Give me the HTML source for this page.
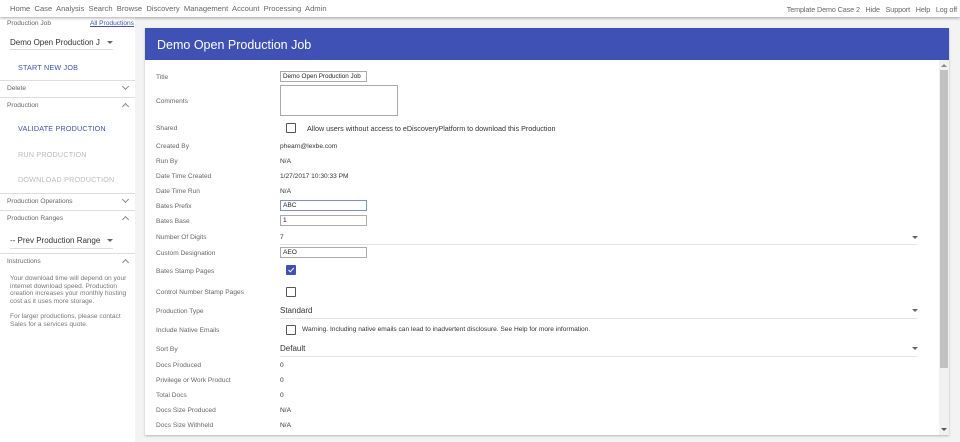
<!DOCTYPE html>
<html><head><meta charset="utf-8"><style>
*{margin:0;padding:0;box-sizing:border-box}
body{width:960px;height:442px;overflow:hidden;background:#f3f3f3;font-family:"Liberation Sans",sans-serif;position:relative;color:#333}
.a{position:absolute;white-space:nowrap}
#nav{position:absolute;left:0;top:0;width:960px;height:17px;background:#fff;box-shadow:0 1px 3px rgba(0,0,0,.35);z-index:2}
#nav .a{font-size:7.6px;color:#666;top:4px}
#side{position:absolute;left:0;top:17px;width:135px;height:425px;background:#fff}
.sl{font-size:6.6px;color:#666}
.hr{position:absolute;left:0;width:135px;height:1px;background:#ddd}
.chev{position:absolute;left:123px;width:5px;height:5px;border-right:1px solid #888;border-bottom:1px solid #888}
.dn{transform:rotate(45deg)}.up{transform:rotate(-135deg)}
.btn{font-size:7.2px;letter-spacing:.2px}
#card{position:absolute;left:145px;top:28px;width:804px;height:407px;background:#fff;box-shadow:0 1px 2px rgba(0,0,0,.25)}
#hd{position:absolute;left:0;top:0;width:804px;height:32px;background:#3f51b5;color:#fff;font-size:12.5px;padding:10px 0 0 12px}
.l{font-size:6.6px;color:#666;left:11px}
.v{font-size:6.6px;color:#333;left:135px}
.in{position:absolute;left:135px;width:87px;height:11px;border:1px solid #aaa;font-size:6.6px;line-height:9px;padding:0 2px;color:#222;white-space:nowrap;overflow:hidden}
.cb{position:absolute;left:141px;width:10px;height:10px;border:1.3px solid #555;border-radius:1px}
.ul{position:absolute;left:135px;width:637px;height:1px;background:#e2e2e2}
.tri{position:absolute;left:767px;width:0;height:0;border-left:3px solid transparent;border-right:3px solid transparent;border-top:3px solid #666}
</style></head><body>
<div id="nav">
<div class="a" style="left:10px">Home&nbsp; Case&nbsp; Analysis&nbsp; Search&nbsp; Browse&nbsp; Discovery&nbsp; Management&nbsp; Account&nbsp; Processing&nbsp; Admin</div>
<div class="a" style="right:3px;top:4.5px;font-size:7.2px;letter-spacing:-0.1px">Template Demo Case 2&nbsp;&nbsp; Hide&nbsp;&nbsp; Support&nbsp;&nbsp; Help&nbsp;&nbsp; Log off</div>
</div>
<div id="side">
<div class="a sl" style="left:7px;top:3px">Production Job</div>
<div class="a sl" style="left:90px;top:3px;color:#3f51b5;text-decoration:underline">All Productions</div>
<div class="a" style="left:10px;top:21px;font-size:8px;color:#333">Demo Open Production J</div>
<div class="tri" style="left:107px;top:24px"></div>
<div style="position:absolute;left:10px;top:32px;width:103px;height:1px;background:#ddd"></div>
<div class="a btn" style="left:18px;top:46px;color:#3f51b5">START NEW JOB</div>
<div class="hr" style="top:63px"></div>
<div class="a sl" style="left:7px;top:68px">Delete</div><div class="chev dn" style="top:67px"></div>
<div class="hr" style="top:80px"></div>
<div class="a sl" style="left:7px;top:85px">Production</div><div class="chev up" style="top:87px"></div>
<div class="a btn" style="left:18px;top:107px;color:#3f51b5">VALIDATE PRODUCTION</div>
<div class="a btn" style="left:18px;top:133px;color:#bbb">RUN PRODUCTION</div>
<div class="a btn" style="left:18px;top:158px;color:#bbb">DOWNLOAD PRODUCTION</div>
<div class="hr" style="top:176px"></div>
<div class="a sl" style="left:7px;top:181px">Production Operations</div><div class="chev dn" style="top:180px"></div>
<div class="hr" style="top:193px"></div>
<div class="a sl" style="left:7px;top:198px">Production Ranges</div><div class="chev up" style="top:200px"></div>
<div class="a" style="left:10px;top:219px;font-size:8px;color:#333">-- Prev Production Range</div>
<div class="tri" style="left:107px;top:222px"></div>
<div style="position:absolute;left:10px;top:231px;width:103px;height:1px;background:#ddd"></div>
<div class="hr" style="top:236px"></div>
<div class="a sl" style="left:7px;top:241px">Instructions</div><div class="chev up" style="top:243px"></div>
<div class="a sl" style="left:10px;top:258px;line-height:7.6px;color:#777">Your download time will depend on your<br>internet download speed. Production<br>creation increases your monthly hosting<br>cost as it uses more storage.<br><br>For larger productions, please contact<br>Sales for a services quote.</div>
</div>
<div id="card">
<div id="hd">Demo Open Production Job</div>
<div style="position:absolute;left:794px;top:32px;width:10px;height:375px;background:#f1f1f1"></div>
<div style="position:absolute;left:795px;top:42px;width:8px;height:298px;background:#c1c1c1"></div>
<div class="tri" style="left:796px;top:36px;transform:rotate(180deg);border-top-color:#888"></div>
<div class="tri" style="left:796px;top:400px;border-top-color:#555"></div>
<div class="a l" style="top:46px">Title</div><div class="in" style="top:43px;font-size:6.3px">Demo Open Production Job</div>
<div class="a l" style="top:70px">Comments</div><div class="in" style="top:57px;width:118px;height:31px"></div>
<div class="a l" style="top:97px">Shared</div><div class="cb" style="top:95px"></div>
<div class="a v" style="left:162px;top:96px;font-size:7.2px">Allow users without access to eDiscoveryPlatform to download this Production</div>
<div class="a l" style="top:115px">Created By</div><div class="a v" style="top:115px">phearn@lexbe.com</div>
<div class="a l" style="top:130px">Run By</div><div class="a v" style="top:130px">N/A</div>
<div class="a l" style="top:145px">Date Time Created</div><div class="a v" style="top:145px">1/27/2017 10:30:33 PM</div>
<div class="a l" style="top:160px">Date Time Run</div><div class="a v" style="top:160px">N/A</div>
<div class="a l" style="top:175px">Bates Prefix</div><div class="in" style="top:172px;border-color:#7b8fd6">ABC</div>
<div class="a l" style="top:190px">Bates Base</div><div class="in" style="top:187px">1</div>
<div class="a l" style="top:206px">Number Of Digits</div><div class="a v" style="top:206px">7</div>
<div class="ul" style="top:216px"></div><div class="tri" style="top:208px"></div>
<div class="a l" style="top:222px">Custom Designation</div><div class="in" style="top:219px">AEO</div>
<div class="a l" style="top:240px">Bates Stamp Pages</div>
<div class="cb" style="top:237px;background:#3f51b5;border-color:#3f51b5"><svg width="8" height="8" style="position:absolute;left:0;top:0"><path d="M1.5 4 L3.3 5.8 L6.8 2" stroke="#fff" stroke-width="1" fill="none"/></svg></div>
<div class="a l" style="top:261px">Control Number Stamp Pages</div><div class="cb" style="top:259px"></div>
<div class="a l" style="top:280px">Production Type</div><div class="a v" style="top:278px;font-size:8px">Standard</div>
<div class="ul" style="top:290px"></div><div class="tri" style="top:281px"></div>
<div class="a l" style="top:299px">Include Native Emails</div><div class="cb" style="top:297px"></div>
<div class="a v" style="left:157px;top:298px">Warning. Including native emails can lead to inadvertent disclosure. See Help for more information.</div>
<div class="a l" style="top:318px">Sort By</div><div class="a v" style="top:316px;font-size:8px">Default</div>
<div class="ul" style="top:328px"></div><div class="tri" style="top:319px"></div>
<div class="a l" style="top:334px">Docs Produced</div><div class="a v" style="top:334px">0</div>
<div class="a l" style="top:349px">Privilege or Work Product</div><div class="a v" style="top:349px">0</div>
<div class="a l" style="top:364px">Total Docs</div><div class="a v" style="top:364px">0</div>
<div class="a l" style="top:379px">Docs Size Produced</div><div class="a v" style="top:379px">N/A</div>
<div class="a l" style="top:394px">Docs Size Withheld</div><div class="a v" style="top:394px">N/A</div>
</div>
</body></html>
